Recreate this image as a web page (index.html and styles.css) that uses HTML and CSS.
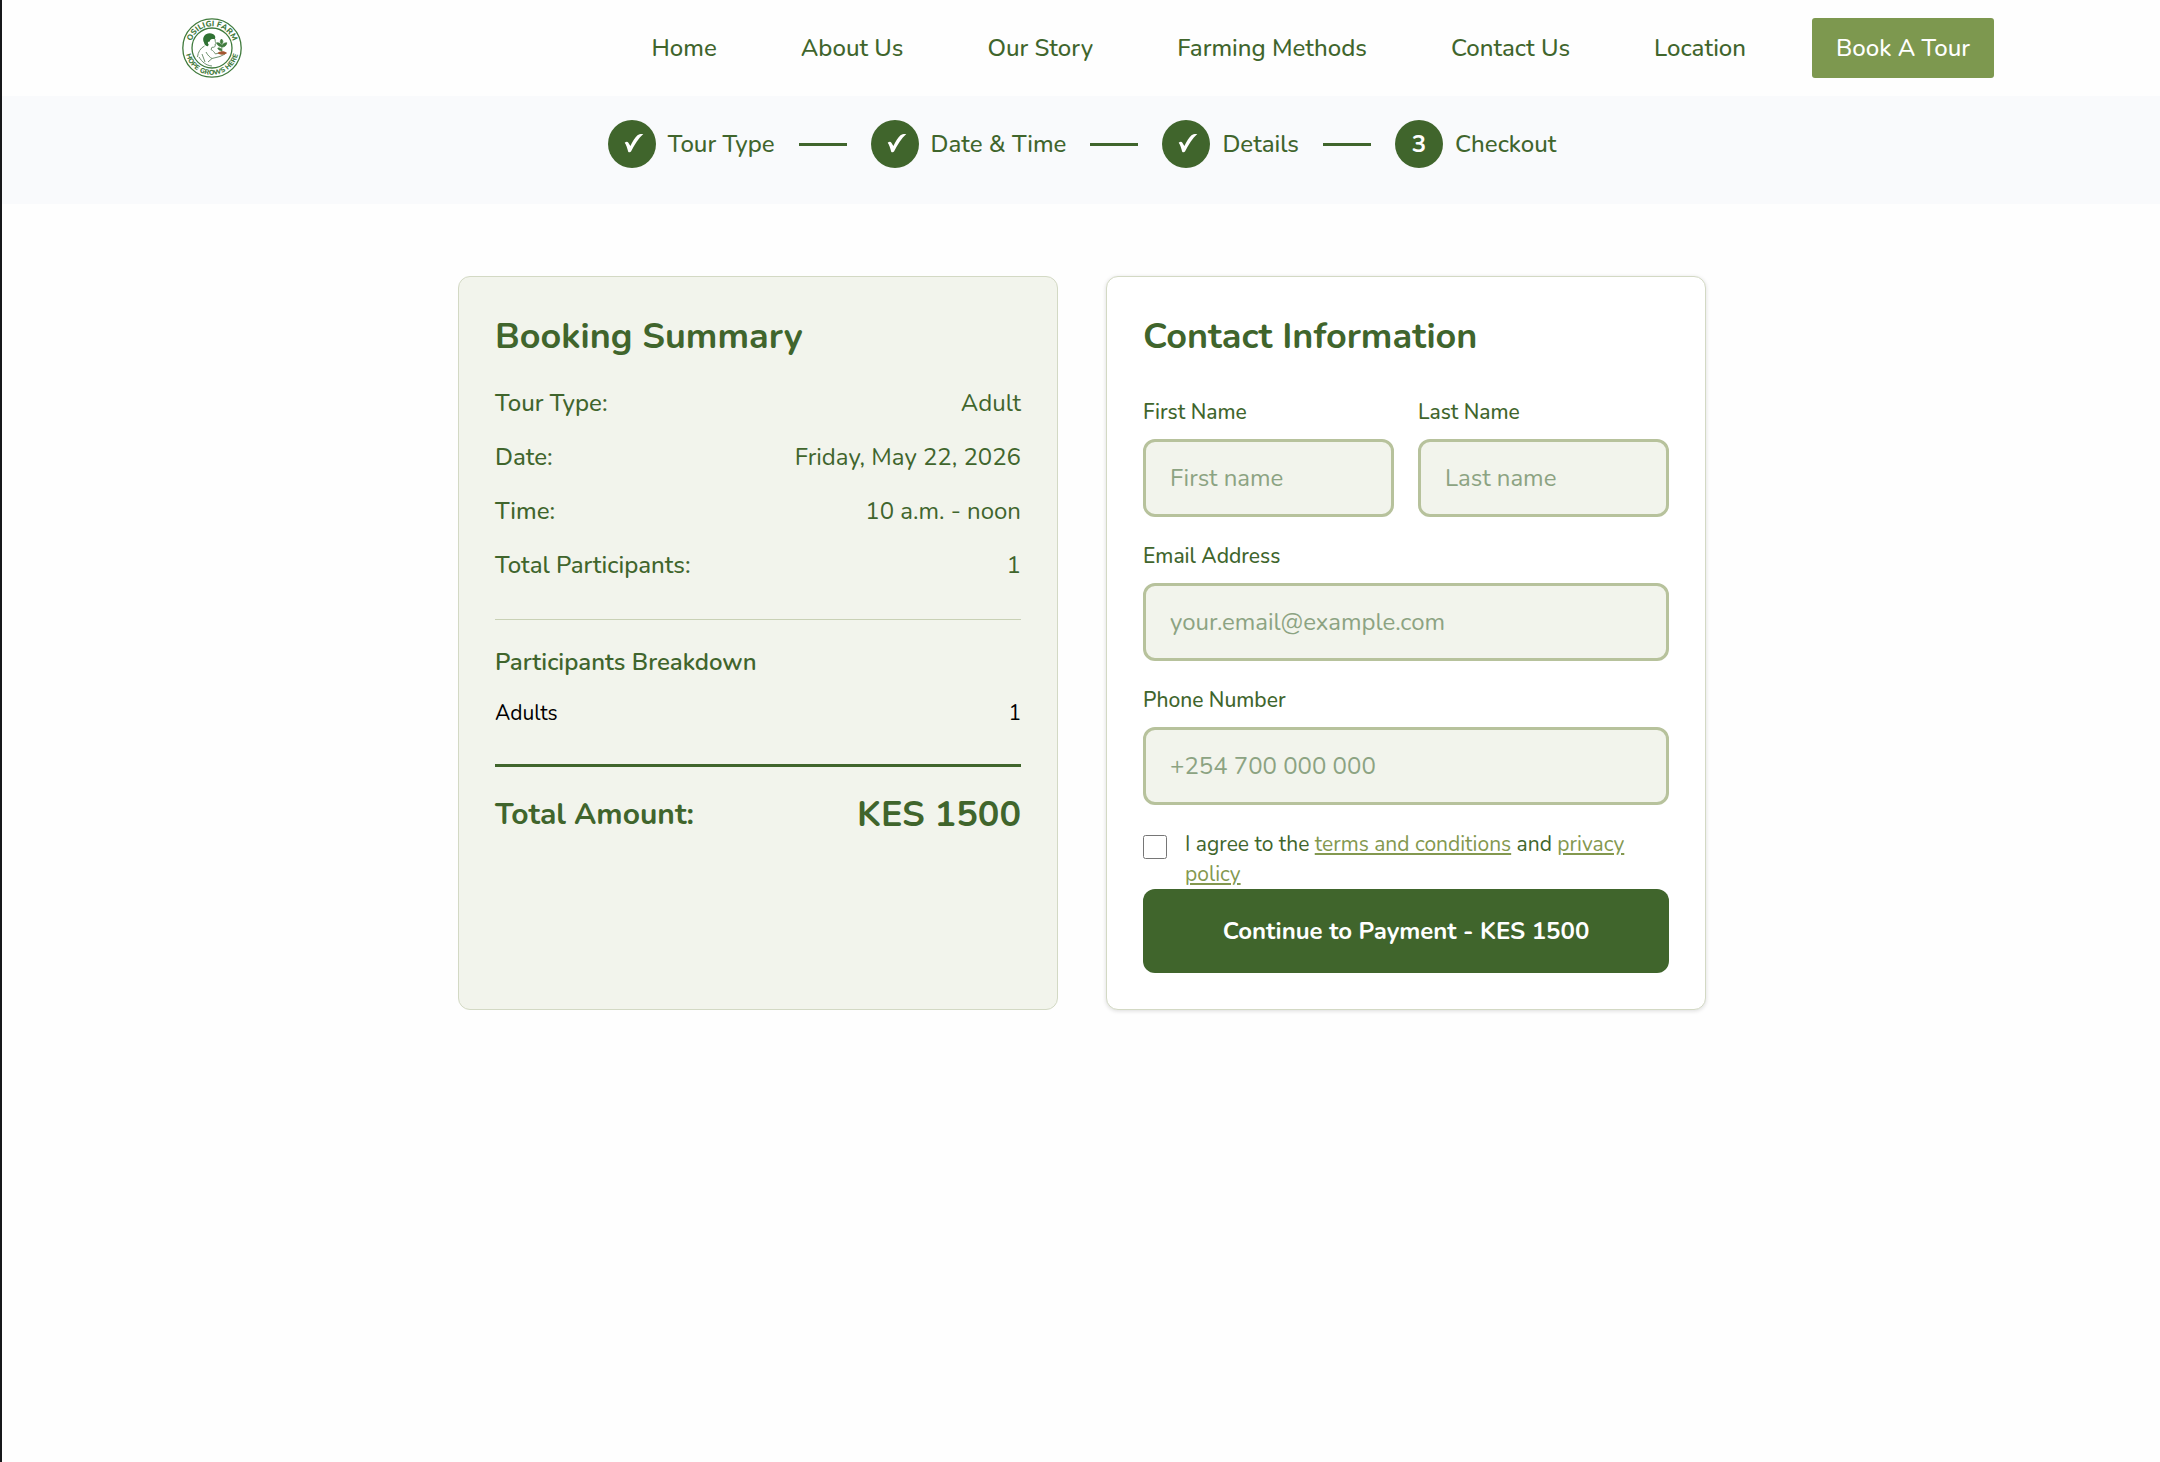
FILE: index.html
```html
<!DOCTYPE html>
<html lang="en">
<head>
  <meta charset="UTF-8">
  <meta name="viewport" content="width=device-width, initial-scale=1.0">
  <title>Checkout | Osiligi Farm</title>
  <link rel="stylesheet" href="styles.css">
</head>
<body>
  <header class="header">
    <div class="header-inner">
      <a href="#" class="logo" aria-label="Osiligi Farm">
        <svg viewBox="0 0 60 60" width="60" height="60">
          <defs>
            <path id="arc-top" d="M8.300 30a21.700 21.700 0 0 1 43.400 0"/>
            <path id="arc-bottom" d="M3.200 30a26.800 26.800 0 0 0 53.600 0"/>
          </defs>
          <circle cx="30" cy="30" r="29.2" fill="#fff" stroke="#3f7a3c" stroke-width="1.3"/>
          <circle cx="30" cy="30" r="20" fill="none" stroke="#3f7a3c" stroke-width="1.3"/>
          <text class="logo-text"><textPath href="#arc-top" startOffset="50%" text-anchor="middle">OSILIGI FARM</textPath></text>
          <text class="logo-text logo-text-small"><textPath href="#arc-bottom" startOffset="50%" text-anchor="middle">HOPE GROWS HERE</textPath></text>
          <!-- farmer -->
          <path d="M22 24.500c-1.500-3-1-6.500 2-8.300 3-1.700 7.500-1.200 9 1.800.5 1.200.3 2.500-.3 3.200-2-.3-4 0-4.700 1.300-.2 1.200-.8 1.600-1.500 1.200-1 .2-.7 2 .2 2.600l-.7 2c-2 0-3.500-1.300-4-3.800z" fill="#2f7133"/>
          <path d="M33 21l.3 2.500 1 2-1.100.5v2c-.3 1.200-2 1.500-3.200 1.200l-1 2.300M22.500 28c-4 2-6.500 6-7 11M29 31.500c2 1 3.500 3 4.500 4.500l4.500-1.500M24 34c1.500 3 4 5.500 6 6.500l8-2 5-2.500M17 39c3 5 7 8.500 13 9M20 36l3 8M30 40.500l-4 3.500" fill="none" stroke="#6f926f" stroke-width="1"/>
          <!-- seedling -->
          <path d="M39.800 34v-8M39.800 28.500c-3 0-4.500-1.200-5-3.700 3.500 0 4.500 1.200 5 3.700zM39.800 26c-1.800-1.200-2-3.300-.3-5 1.800 1.700 1.800 3.500.3 5zM39.800 29c.5-3 2.200-4.200 5-4.200-.5 3-2.200 4.200-5 4.200zM39.800 32.500c-2.500 0-3.500-.8-4-2.500 2.500-.3 3.700.5 4 2.500z" fill="#3f7a3c" stroke="#3f7a3c" stroke-width=".8"/>
          <path d="M35.500 35.300c1.500-2.500 7-3 9.500-.3-2 2-7 2.300-9.500.3z" fill="#a4562f"/>
        </svg>
      </a>
      <nav class="nav">
        <a href="#">Home</a>
        <a href="#">About Us</a>
        <a href="#">Our Story</a>
        <a href="#">Farming Methods</a>
        <a href="#">Contact Us</a>
        <a href="#">Location</a>
        <a href="#" class="nav-btn">Book A Tour</a>
      </nav>
    </div>
  </header>

  <ol class="steps">
    <li class="step">
      <span class="step-circle"><svg viewBox="0 0 24 24" width="24" height="24"><path d="M4.700 10.800c1.200-1.200 2.800-1.400 3.500-.4l2.200 3.700C12.500 9.500 15 5.500 17.500 3.200c1.500-1.200 4-1.500 5.800-1.200C18.500 6 14.500 12.500 11 19.600c-.6 1-2.200 1-2.800.1C7.300 16.500 6.300 13 4.700 10.800z" fill="#fff"/></svg></span>
      <span>Tour Type</span>
    </li>
    <li class="step">
      <span class="step-circle"><svg viewBox="0 0 24 24" width="24" height="24"><path d="M4.700 10.800c1.200-1.200 2.800-1.400 3.500-.4l2.200 3.700C12.500 9.500 15 5.500 17.500 3.200c1.500-1.200 4-1.500 5.800-1.200C18.500 6 14.500 12.500 11 19.600c-.6 1-2.200 1-2.800.1C7.300 16.500 6.300 13 4.700 10.800z" fill="#fff"/></svg></span>
      <span>Date &amp; Time</span>
    </li>
    <li class="step">
      <span class="step-circle"><svg viewBox="0 0 24 24" width="24" height="24"><path d="M4.700 10.800c1.200-1.200 2.800-1.400 3.500-.4l2.200 3.700C12.500 9.500 15 5.500 17.500 3.200c1.500-1.200 4-1.500 5.800-1.200C18.500 6 14.500 12.500 11 19.600c-.6 1-2.200 1-2.800.1C7.300 16.500 6.300 13 4.700 10.800z" fill="#fff"/></svg></span>
      <span>Details</span>
    </li>
    <li class="step">
      <span class="step-circle">3</span>
      <span>Checkout</span>
    </li>
  </ol>

  <main class="checkout">
    <section class="card summary">
      <h2>Booking Summary</h2>
      <div class="rows">
        <div class="row"><span class="row-label">Tour Type:</span><span>Adult</span></div>
        <div class="row"><span class="row-label">Date:</span><span>Friday, May 22, 2026</span></div>
        <div class="row"><span class="row-label">Time:</span><span>10 a.m. - noon</span></div>
        <div class="row"><span class="row-label">Total Participants:</span><span>1</span></div>
      </div>
      <div class="breakdown">
        <h3>Participants Breakdown</h3>
        <div class="row row-small"><span>Adults</span><span>1</span></div>
      </div>
      <div class="row total">
        <span>Total Amount:</span>
        <span class="total-value">KES 1500</span>
      </div>
    </section>

    <section class="card contact">
      <h2>Contact Information</h2>
      <form class="form">
        <div class="form-row">
          <div class="field">
            <label for="first-name">First Name</label>
            <input type="text" id="first-name" placeholder="First name">
          </div>
          <div class="field">
            <label for="last-name">Last Name</label>
            <input type="text" id="last-name" placeholder="Last name">
          </div>
        </div>
        <div class="field">
          <label for="email">Email Address</label>
          <input type="email" id="email" placeholder="your.email@example.com">
        </div>
        <div class="field">
          <label for="phone">Phone Number</label>
          <input type="tel" id="phone" placeholder="+254 700 000 000">
        </div>
        <div class="submit-group">
          <div class="terms">
            <input type="checkbox" id="terms">
            <label for="terms">I agree to the <a href="#">terms and conditions</a> and <a href="#">privacy policy</a></label>
          </div>
          <button type="submit" class="pay-btn">Continue to Payment - KES 1500</button>
        </div>
      </form>
    </section>
  </main>
</body>
</html>
```
FILE: styles.css
```css
/* General styling */
* {
  box-sizing: border-box;
}

body {
  margin: 0;
  min-height: 100vh;
  border-left: 2px solid #17181a;
  background-color: #fefefe;
  color: #40652c;
  font-family: Nunito, Lato, sans-serif;
  font-size: 24px;
  line-height: 36px;
}

h2,
h3 {
  margin: 0;
}

/* Header */
.header-inner {
  max-width: 1826px;
  min-height: 96px;
  margin: 0 auto;
  display: flex;
  align-items: center;
  justify-content: space-between;
}

.logo {
  display: flex;
  margin-left: 14px;
}

.logo-text {
  font-size: 8px;
  font-weight: 800;
  fill: #3f7a3c;
}

.logo-text-small {
  font-size: 7px;
}

.nav {
  display: flex;
  align-items: center;
  gap: 48px;
}

.nav a {
  padding: 12px 18px;
  color: #40652c;
  font-weight: 500;
  text-decoration: none;
}

.nav .nav-btn {
  padding: 12px 24px;
  border-radius: 3px;
  background-color: #7d984f;
  color: #fff;
}

/* Progress steps */
.steps {
  display: flex;
  justify-content: center;
  margin: 0;
  padding: 24px 0 36px 2px;
  list-style: none;
  background-color: #f9fafc;
  font-weight: 500;
}

.step {
  display: flex;
  align-items: center;
  gap: 12px;
}

.step:not(:last-child)::after {
  content: "";
  width: 48px;
  height: 3px;
  margin: 0 24px 0 12px;
  background-color: #40652c;
}

.step-circle {
  width: 48px;
  height: 48px;
  display: flex;
  align-items: center;
  justify-content: center;
  border-radius: 50%;
  background-color: #40652c;
  color: #fff;
  font-weight: bold;
}

/* Cards */
.checkout {
  max-width: 1250px;
  margin: 72px auto;
  padding-left: 2px;
  display: grid;
  grid-template-columns: 1fr 1fr;
  gap: 48px;
}

.card {
  padding: 36px;
  border: 1px solid #d3d9c4;
  border-radius: 12px;
}

.card h2 {
  font-size: 36px;
  line-height: 48px;
}

.summary {
  background-color: #f2f4ec;
}

.contact {
  background-color: #fff;
  box-shadow: 0 1px 4px rgba(0, 0, 0, 0.14);
}

/* Booking summary */
.rows {
  display: grid;
  gap: 18px;
  margin: 24px 0 36px;
}

.row {
  display: flex;
  align-items: center;
  justify-content: space-between;
}

.row-label {
  font-weight: 500;
}

.breakdown {
  padding-top: 24px;
  border-top: 1px solid #c9d1b5;
}

.breakdown h3 {
  margin-bottom: 18px;
  font-size: 24px;
  font-weight: 600;
}

.row-small {
  color: #000;
  font-size: 21px;
  line-height: 30px;
}

.total {
  margin-top: 36px;
  padding-top: 24px;
  border-top: 3px solid #40652c;
  font-size: 30px;
  font-weight: bold;
  line-height: 48px;
}

.total-value {
  font-size: 36px;
}

/* Contact form */
.form {
  display: grid;
  gap: 24px;
  margin-top: 36px;
}

.form-row {
  display: grid;
  grid-template-columns: 1fr 1fr;
  gap: 24px;
}

.field {
  display: grid;
  gap: 12px;
}

.field label,
.terms label {
  font-size: 21px;
  line-height: 30px;
}

.field label {
  font-weight: 500;
}

.field input {
  width: 100%;
  min-width: 0;
  height: 78px;
  padding: 0 24px;
  border: 3px solid #b7c29c;
  border-radius: 12px;
  background-color: #f2f4ec;
  color: #40652c;
  font: inherit;
}

.field input::placeholder {
  color: #8ca382;
  opacity: 1;
}

.submit-group {
  display: grid;
}

.terms {
  display: flex;
  align-items: flex-start;
  gap: 18px;
}

.terms input {
  width: 24px;
  height: 24px;
  flex-shrink: 0;
  margin: 6px 0 0;
}

.terms a {
  color: #83984f;
}

.pay-btn {
  height: 84px;
  border: none;
  border-radius: 12px;
  background-color: #40652c;
  color: #fff;
  font: inherit;
  font-weight: bold;
  cursor: pointer;
}

@media (max-width: 1100px) {
  .checkout {
    grid-template-columns: 1fr;
    padding: 0 24px;
  }
}
```
